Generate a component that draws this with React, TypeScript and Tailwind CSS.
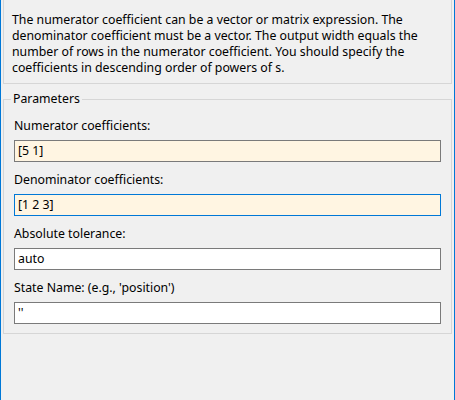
const font = { fontFamily: '"Noto Sans", "Open Sans", sans-serif' }

interface Field {
  label: string
  value: string
  tone: 'cream' | 'white'
  focused?: boolean
}

const fields: Field[] = [
  { label: 'Numerator coefficients:', value: '[5 1]', tone: 'cream' },
  { label: 'Denominator coefficients:', value: '[1 2 3]', tone: 'cream', focused: true },
  { label: 'Absolute tolerance:', value: 'auto', tone: 'white' },
  { label: "State Name: (e.g., 'position')", value: "''", tone: 'white' },
]

export default function App() {
  return (
    <div
      className="w-[455px] h-[400px] bg-[#f0f0f0] border-x border-[#0078d7] text-[12.3px] text-[#000] overflow-hidden"
      style={font}
    >
      <div className="mx-[2px] border-x border-b border-[#d6d6d6] pl-[8px] pr-[4px] pt-[12px] pb-[6px] leading-[16px] h-[84px]">
        The numerator coefficient can be a vector or matrix expression. The denominator coefficient must be a
        vector. The output width equals the number of rows in the numerator coefficient. You should specify the
        coefficients in descending order of powers of s.
      </div>

      <fieldset className="mx-[2px] mt-[7px] border border-[#d6d6d6] px-[10px] pb-[9px]">
        <legend className="-ml-[3px] px-[2px] leading-[16px]">Parameters</legend>
        <div className="flex flex-col pt-[11px]">
          {fields.map((f) => (
            <div key={f.label} className="flex flex-col mb-[10px] last:mb-0">
              <div className="h-[16px] leading-[16px]">{f.label}</div>
              <div
                className={`mt-[6px] h-[22px] flex items-center px-[3px] border ${
                  f.focused ? 'border-[#0078d7]' : 'border-[#7a7a7a]'
                } ${f.tone === 'cream' ? 'bg-[#fff5e2]' : 'bg-white'}`}
              >
                {f.value}
              </div>
            </div>
          ))}
        </div>
      </fieldset>
    </div>
  )
}
